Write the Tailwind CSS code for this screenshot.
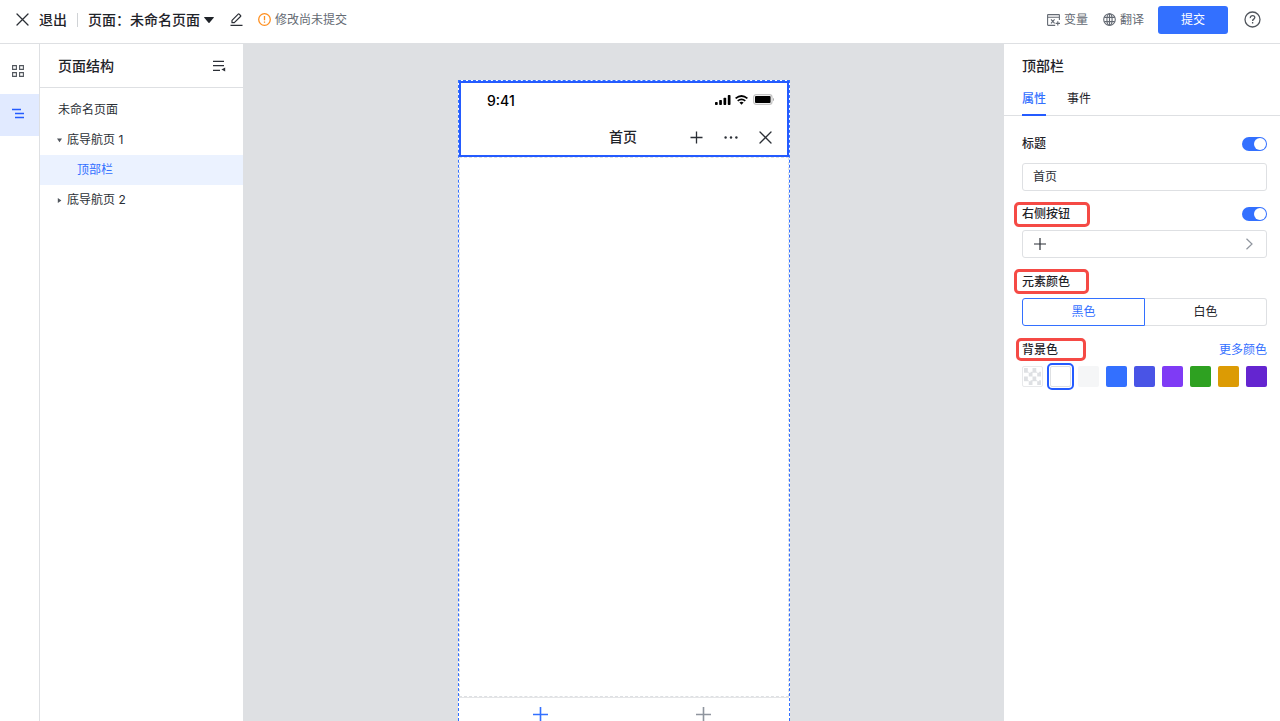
<!DOCTYPE html>
<html lang="zh-CN">
<head>
<meta charset="utf-8">
<meta name="viewport" content="width=device-width, initial-scale=1">
<title>未命名页面</title>
<script src="https://cdn.jsdelivr.net/npm/@tailwindcss/browser@4"></script>
</head>
<body class="flex h-screen flex-col overflow-hidden bg-white font-['Inter','Noto_Sans_CJK_SC',sans-serif] text-xs text-[#1f2329]">

<header class="flex h-11 shrink-0 items-center border-b border-[#dee0e3] pb-1 pr-[19px] pl-4">
  <button class="flex items-center gap-[10px] text-sm font-medium">
    <svg class="size-[13px]" viewBox="0 0 13 13" fill="none" stroke="#2b2f36" stroke-width="1.3" stroke-linecap="round"><path d="M1 1l11 11M12 1L1 12"/></svg>
    退出
  </button>
  <span class="mr-[10px] ml-[10px] h-[14px] w-px bg-[#d0d3d6]"></span>
  <button class="flex items-center text-sm font-medium">
    <span>页面：未命名页面</span>
    <svg class="ml-1 h-[6px] w-[10px]" viewBox="0 0 10 6" fill="#1f2329"><path d="M.5 0h9q.6.1.2.7L5.500 5.700q-.5.4-1 0L.3.7Q-.1.1.5 0z"/></svg>
  </button>
  <button class="ml-4" aria-label="重命名">
    <svg class="size-[13px]" viewBox="0 0 13 13" fill="none" stroke="#2b2f36" stroke-width="1.2" stroke-linejoin="round"><path d="M.5 12.3h12M2 9.7V7.4L8.2 1.2q.5-.5 1 0l1.3 1.3q.5.5 0 1L4.3 9.7z"/></svg>
  </button>
  <div class="ml-[15px] flex items-center gap-1 text-[#646a73]">
    <svg class="size-[13px]" viewBox="0 0 13 13" fill="none" stroke="#ff8f1f" stroke-width="1.3"><circle cx="6.5" cy="6.5" r="5.8"/><path d="M6.5 3v4.200M6.5 8.500v1.300"/></svg>
    修改尚未提交
  </div>
  <nav class="ml-auto flex items-center text-[#646a73]">
    <button class="flex items-center gap-1">
      <svg class="h-3 w-[13px]" viewBox="0 0 13 12" fill="none" stroke="#646a73" stroke-width="1.1"><path d="M12.4 6V1.2q0-.6-.6-.6H1.2q-.6 0-.6.6v9.6q0 .6.6.6h7M.6 3.2h11.8M4 5.400l3.600 4M7.600 5.400L4 9.400M10.800 7.200v4.400M8.600 9.400H13"/></svg>
      变量
    </button>
    <button class="ml-[15px] flex items-center gap-1">
      <svg class="size-[13px]" viewBox="0 0 13 13" fill="none" stroke="#646a73" stroke-width="1.1"><circle cx="6.5" cy="6.5" r="5.8"/><ellipse cx="6.5" cy="6.5" rx="2.6" ry="5.8"/><path d="M1.200 4.400h10.600M1.200 8.600h10.600M6.500.7v11.600"/></svg>
      翻译
    </button>
    <button class="ml-[14px] h-7 w-[70px] rounded-[3px] bg-[#3370ff] text-white">提交</button>
    <button class="ml-4" aria-label="帮助">
      <svg class="size-[17px]" viewBox="0 0 17 17" fill="none" stroke="#51565d" stroke-width="1.3"><circle cx="8.5" cy="8.5" r="7.5"/><path d="M6.3 7.1C6.2 5.5 7.3 4.7 8.6 4.7s2.2.8 2.2 1.9c0 1.5-2.2 1.6-2.2 3.3M8.6 11v1.4"/></svg>
    </button>
  </nav>
</header>

<div class="flex min-h-0 flex-1">
  <nav class="flex w-10 shrink-0 flex-col border-r border-[#dee0e3] pt-2">
    <button class="flex h-[42px] items-center pb-1 pl-3" aria-label="组件">
      <svg class="size-3" viewBox="0 0 12 12" fill="none" stroke="#51565d" stroke-width="1.1"><path d="M.6.6h3.800v3.800H.6zM7.600.6h3.800v3.800H7.600zM.6 7.600h3.800v3.800H.6zM7.600 7.600h3.800v3.800H7.600z"/></svg>
    </button>
    <button class="flex h-[42px] items-center bg-[#e1eaff] pb-1 pl-3" aria-label="页面结构">
      <svg class="h-[11px] w-3" viewBox="0 0 12 11" fill="none" stroke="#245bff" stroke-width="1.6"><path d="M0 1.500h9M3 5.500h9M3 9.500h9"/></svg>
    </button>
  </nav>

  <aside class="w-[204px] shrink-0 border-r border-[#dee0e3]">
    <div class="flex h-11 items-center justify-between border-b border-[#dee0e3] pr-[17px] pl-[18px]">
      <h2 class="text-sm font-medium">页面结构</h2>
      <button aria-label="收起面板">
        <svg class="h-3 w-[14px]" viewBox="0 0 14 12"><path d="M1 1.400h11M1 5.700h11M1 10.400h7" stroke="#2b2f36" stroke-width="1.3"/><path d="M13.200 7.600v4L9.400 9.600z" fill="#2b2f36"/></svg>
      </button>
    </div>
    <ul class="pt-[7px] text-[#2b2f36] *:h-[30px]">
      <li><button class="flex h-full w-full items-center pl-[18px]">未命名页面</button></li>
      <li><button class="flex h-full w-full items-center gap-[5px] pl-[17px]"><svg class="size-[5px]" viewBox="0 0 5 5" fill="#51565d"><path d="M0 .6h5L2.500 4.200z"/></svg>底导航页 1</button></li>
      <li><button class="flex h-full w-full items-center bg-[#ebf2ff] pl-[37px] text-[#3370ff]">顶部栏</button></li>
      <li><button class="flex h-full w-full items-center gap-[5px] pl-[17px]"><svg class="size-[5px]" viewBox="0 0 5 5" fill="#51565d"><path d="M.8 0v5l3.600-2.500z"/></svg>底导航页 2</button></li>
    </ul>
  </aside>

  <main class="flex min-w-0 flex-1 justify-center overflow-hidden bg-[#dee0e3] pt-9">
    <div class="flex w-[332px] shrink-0 flex-col border border-b-0 border-dashed border-[#3370ff] bg-white">
      <section class="h-[76px] shrink-0 border-2 border-[#245bff] pr-[13px] pl-[26px]">
        <div class="flex h-9 items-center">
          <span class="text-sm font-medium text-black">9:41</span>
          <div class="ml-auto flex items-center pb-[3px]">
            <svg class="h-[10px] w-4" viewBox="0 0 16 10" fill="#000"><rect y="7" width="2.7" height="3" rx=".7"/><rect x="4.2" y="5" width="2.7" height="5" rx=".7"/><rect x="8.5" y="2.7" width="2.7" height="7.3" rx=".7"/><rect x="12.8" width="2.7" height="10" rx=".7"/></svg>
            <svg class="ml-1 h-[10px] w-[13px]" viewBox="0 0 13 10" fill="none" stroke="#000" stroke-width="1.7"><path d="M.6 3.400Q6.500-1.400 12.400 3.400M2.700 5.800q3.800-3 7.600 0"/><path d="M4.400 7.500q2.100-1.600 4.200 0L6.500 9.700z" fill="#000" stroke="none"/></svg>
            <svg class="ml-[5px] h-[11px] w-[21px]" viewBox="0 0 21 11"><rect x=".6" y=".6" width="18.4" height="9.800" rx="2.600" fill="#fff" stroke="#c4c4c4" stroke-width="1.2"/><rect x="2" y="2" width="15.600" height="7" rx="1" fill="#000"/><path d="M20 3.700q1 .6 1 1.800t-1 1.800z" fill="#aaa"/></svg>
          </div>
        </div>
        <div class="grid h-9 grid-cols-[1fr_auto_1fr] items-center">
          <h1 class="col-start-2 ml-[-15px] text-sm font-medium">首页</h1>
          <div class="flex items-center justify-end gap-[21px] pr-[2px] text-[#2b2f36]">
            <svg class="size-[13px]" viewBox="0 0 13 13" stroke="currentColor" stroke-width="1.3"><path d="M6.500.5v12M.5 6.500h12"/></svg>
            <svg class="h-[3px] w-[14px]" viewBox="0 0 14 3" fill="currentColor"><circle cx="1.600" cy="1.500" r="1.200"/><circle cx="7" cy="1.500" r="1.200"/><circle cx="12.400" cy="1.500" r="1.200"/></svg>
            <svg class="size-[13px]" viewBox="0 0 13 13" stroke="currentColor" stroke-width="1.3" stroke-linecap="round"><path d="M1 1l11 11M12 1L1 12"/></svg>
          </div>
        </div>
      </section>
      <section class="min-h-0 flex-1 border border-dashed border-[#dee0e3]"></section>
      <footer class="grid h-6 shrink-0 grid-cols-2 justify-items-center border-t border-[#e4e5e7] pt-[9px] pr-1">
        <svg class="size-[15px]" viewBox="0 0 15 15" stroke="#3370ff" stroke-width="1.600"><path d="M7.500 0v15M0 7.500h15"/></svg>
        <svg class="size-[15px]" viewBox="0 0 15 15" stroke="#8f959e" stroke-width="1.600"><path d="M7.500 0v15M0 7.500h15"/></svg>
      </footer>
    </div>
  </main>

  <aside class="w-[276px] shrink-0">
    <h2 class="flex h-11 items-center pl-[18px] text-sm font-medium">顶部栏</h2>
    <div class="flex h-7 gap-[21px] border-b border-[#dee0e3] pl-[18px]" role="tablist">
      <button role="tab" aria-selected="true" class="-mb-px border-b-2 border-[#245bff] pb-1 font-medium text-[#3370ff]">属性</button>
      <button role="tab" aria-selected="false" class="-mb-px border-b-2 border-transparent pb-1">事件</button>
    </div>
    <form class="pt-[18px] pr-[13px] pl-[18px]">
      <div class="flex h-5 items-center justify-between">
        <label for="title-on" class="font-medium">标题</label>
        <input id="title-on" type="checkbox" checked class="h-[14px] w-[25px] appearance-none rounded-full bg-[#3370ff] p-px before:ml-auto before:block before:size-3 before:rounded-full before:bg-white">
      </div>
      <input type="text" value="首页" aria-label="标题" class="mt-[9px] block h-7 w-full rounded-[3px] border border-[#dee0e3] px-[10px] pb-[3px] text-[#2b2f36]">

      <div class="mt-[13px] flex h-5 items-center justify-between">
        <label for="right-on" class="relative font-medium">右侧按钮<span class="absolute -top-1 -left-2 h-[25px] w-[76px] rounded-[5px] border-3 border-[#f54a45]"></span></label>
        <input id="right-on" type="checkbox" checked class="h-[14px] w-[25px] appearance-none rounded-full bg-[#3370ff] p-px before:ml-auto before:block before:size-3 before:rounded-full before:bg-white">
      </div>
      <button type="button" aria-label="编辑右侧按钮" class="mt-[6px] flex h-7 w-full items-center justify-between rounded-[3px] border border-[#dee0e3] px-[11px]">
        <svg class="size-3" viewBox="0 0 12 12" stroke="#2b2f36" stroke-width="1.200"><path d="M6 0v12M0 6h12"/></svg>
        <svg class="mr-px h-3 w-[10px]" viewBox="0 0 10 12" fill="none" stroke="#8f959e" stroke-width="1.200"><path d="M2.500.8L8 6l-5.500 5.200"/></svg>
      </button>

      <div class="mt-[14px] flex h-5 items-center">
        <span id="element-color" class="relative font-medium">元素颜色<span class="absolute -top-[5px] -left-2 h-[25px] w-[75px] rounded-[5px] border-3 border-[#f54a45]"></span></span>
      </div>
      <div class="mt-[6px] flex h-7" role="group" aria-labelledby="element-color">
        <button type="button" aria-pressed="true" class="flex-1 rounded-l-[3px] border border-[#3370ff] text-[#3370ff]">黑色</button>
        <button type="button" aria-pressed="false" class="flex-1 rounded-r-[3px] border border-l-0 border-[#dee0e3]">白色</button>
      </div>

      <div class="mt-[14px] flex h-5 items-center justify-between">
        <span id="background-color" class="relative font-medium">背景色<span class="absolute -top-1 -left-1.5 h-[23px] w-[70px] rounded-[5px] border-3 border-[#f54a45]"></span></span>
        <a href="#" class="text-[#3370ff]">更多颜色</a>
      </div>
      <div class="mt-[6px] flex justify-between *:size-[21px] *:appearance-none *:rounded-[2px]" role="radiogroup" aria-labelledby="background-color">
        <input type="radio" name="bg" aria-label="透明" class="border border-[#e8e9eb] bg-[repeating-conic-gradient(#fff_0_25%,#dee0e3_0_50%)] bg-size-[50%_50%] bg-clip-content bg-origin-content p-px">
        <input type="radio" name="bg" aria-label="白色" checked class="border border-[#dee0e3] bg-white outline-2 outline-offset-1 outline-[#245bff]">
        <input type="radio" name="bg" aria-label="浅灰" class="bg-[#f5f6f7]">
        <input type="radio" name="bg" aria-label="蓝色" class="bg-[#3370ff]">
        <input type="radio" name="bg" aria-label="靛蓝" class="bg-[#4954e6]">
        <input type="radio" name="bg" aria-label="紫色" class="bg-[#7f3bf5]">
        <input type="radio" name="bg" aria-label="绿色" class="bg-[#2ea121]">
        <input type="radio" name="bg" aria-label="黄色" class="bg-[#dc9b04]">
        <input type="radio" name="bg" aria-label="深紫" class="bg-[#6425d0]">
      </div>
    </form>
  </aside>
</div>
</body>
</html>
